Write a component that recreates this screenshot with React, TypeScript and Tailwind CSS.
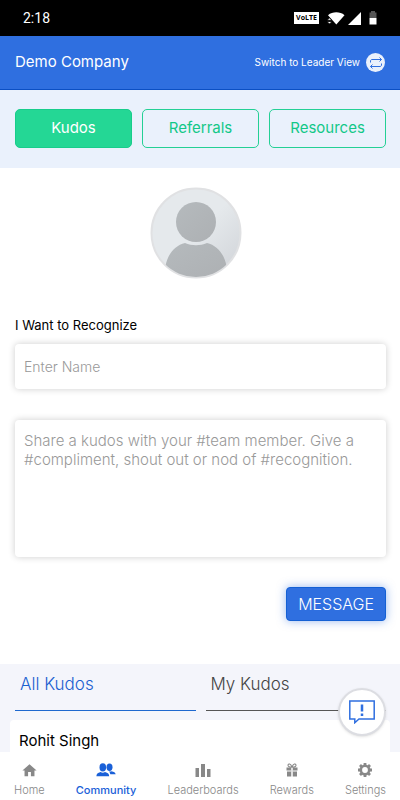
import type { ReactNode } from "react";
import { MdHome } from "react-icons/md";

const topTabs = ["Kudos", "Referrals", "Resources"];

const navItems: { label: string; icon: ReactNode }[] = [
  { label: "Home", icon: <MdHome className="size-[17px]" /> },
  { label: "Community", icon: <PeopleIcon /> },
  { label: "Leaderboards", icon: <BarsIcon /> },
  { label: "Rewards", icon: <GiftIcon /> },
  { label: "Settings", icon: <GearIcon /> },
];

function PeopleIcon() {
  return (
    <svg viewBox="0 0 20 14" className="h-[14px] w-5" fill="currentColor" aria-hidden="true">
      <ellipse cx="13.5" cy="4.2" rx="3" ry="3.7" />
      <path d="M13 8.300c1 .3 1.800.2 2.500 0 2.500.5 3.900 1.300 4.200 3h-5.400c-.2-1.200-.6-2-1.300-3Z" />
      <ellipse cx="6.800" cy="4.400" rx="3.300" ry="4.100" />
      <path d="M.4 13.300c0-2.400 1.200-3.300 4.200-4.200 1.400.7 3 .7 4.400 0 3 .9 4.200 1.800 4.200 4.200Z" />
    </svg>
  );
}

function BarsIcon() {
  return (
    <svg viewBox="0 0 16 14" className="h-[14px] w-4" fill="currentColor" aria-hidden="true">
      <path d="M.5 5h3.500v9H.5zM6 1h4v13H6zM12 6h3.500v8H12z" />
    </svg>
  );
}

function GiftIcon() {
  return (
    <svg viewBox="0 0 12 14" className="h-[14px] w-3" fill="currentColor" aria-hidden="true">
      <path d="M.5 4.500H5v3H.5zM7 4.500h4.500v3H7zM1 8.500h4v5H1zM7 8.500h4v5H7z" />
      <path d="M5.500 5h1v8.500h-1z" opacity=".5" />
      <path
        d="M6 4.300C4.500 4.300 2 3.900 2 2.300 2 .3 5 .4 6 4.300ZM6 4.300c1.500 0 4-.4 4-2C10 .3 7 .4 6 4.300Z"
        fill="none"
        stroke="currentColor"
        strokeWidth="1.100"
      />
    </svg>
  );
}

function GearIcon() {
  return (
    <svg viewBox="0 0 14 14" className="size-[14px]" fill="none" stroke="currentColor" aria-hidden="true">
      <circle cx="7" cy="7" r="4.200" strokeWidth="2.600" />
      <path
        d="M7 0v2M7 12v2M0 7h2M12 7h2M2 2l1.500 1.500M10.500 10.500 12 12M12 2l-1.500 1.500M3.500 10.500 2 12"
        strokeWidth="2.800"
      />
    </svg>
  );
}

function SwapIcon() {
  return (
    <svg
      viewBox="0 0 14 14"
      className="size-[14px]"
      fill="none"
      stroke="currentColor"
      strokeWidth="1"
      aria-hidden="true"
    >
      <path d="M1.500 6.500V5c0-.8.600-1.500 1.500-1.500h9.500M10.500 1.500l2 2-2 2M12.500 7.500V9c0 .8-.6 1.500-1.500 1.500H1.500M3.500 8.500l-2 2 2 2" />
    </svg>
  );
}

function StatusIcons() {
  return (
    <div className="flex items-center">
      <span className="flex h-3 w-[25px] items-center justify-center bg-white font-['Open_Sans',sans-serif] text-[7px] leading-3 font-bold text-black">
        VoLTE
      </span>
      <svg viewBox="0 0 18 14" className="ml-2 h-[14px] w-[18px]" fill="white" aria-hidden="true">
        <path d="M1 4.200C5.500.4 13 .4 17.500 4.200L9.300 13.500Z" />
        <path d="M2.500 7 5 9.300H0zM0 10.500h5L2.500 13z" stroke="black" strokeWidth=".8" />
      </svg>
      <svg viewBox="0 0 13 13" className="ml-[3px] size-[13px]" fill="white" aria-hidden="true">
        <path d="M13 0v13H0z" />
      </svg>
      <svg viewBox="0 0 8 14" className="ml-2 h-[14px] w-2" aria-hidden="true">
        <path d="M2 0h4v1.500h1.500V7H.5V1.500H2z" fill="#555" />
        <path d="M.5 7h7v6.500h-7z" fill="white" />
      </svg>
    </div>
  );
}

function Avatar() {
  return (
    <svg viewBox="0 0 92 92" className="size-[92px]" role="img" aria-label="Profile photo">
      <defs>
        <linearGradient id="avatar-back" x1="0" y1="0" x2="1" y2="1">
          <stop offset="0.5" stopColor="#e5e9ec" />
          <stop offset="1" stopColor="#cfd2d7" />
        </linearGradient>
        <linearGradient id="avatar-person" x1="0" y1="0" x2="1" y2="1">
          <stop offset="0" stopColor="#b5babd" />
          <stop offset="1" stopColor="#adb0b3" />
        </linearGradient>
        <clipPath id="avatar-clip">
          <circle cx="46" cy="46" r="44" />
        </clipPath>
      </defs>
      <circle cx="46" cy="46" r="44.500" fill="url(#avatar-back)" stroke="#e0e1e3" strokeWidth="2" />
      <g clipPath="url(#avatar-clip)" fill="url(#avatar-person)">
        <circle cx="46" cy="35" r="20" />
        <path d="M15.500 79c2-11.500 9-20.500 19.500-23 7 3 15 3 22 0 10.500 2.500 17.500 11.500 19.500 23v13h-61z" />
      </g>
    </svg>
  );
}

export default function App() {
  return (
    <div className="flex min-h-screen flex-col bg-white font-['Inter',sans-serif] font-light text-black">
      <div className="flex h-9 items-center justify-between bg-black pr-[23px] pl-[23px]">
        <span className="font-['Roboto',sans-serif] text-sm font-normal text-white">2:18</span>
        <StatusIcons />
      </div>

      <header className="flex h-[54px] items-center justify-between border-b border-[#0b4fc4] bg-[#2f6fe0] pr-[15px] pl-[15px] text-white">
        <h1 className="text-[15px] font-normal">Demo Company</h1>
        <button type="button" className="flex items-center gap-[6px] text-[10px] font-normal">
          Switch to Leader View
          <span className="flex size-[19px] items-center justify-center rounded-full bg-[#eaf1fc] text-[#2f6fe0]">
            <SwapIcon />
          </span>
        </button>
      </header>

      <div className="grid grid-cols-3 gap-[10px] bg-[#eaf1fc] pt-[19px] pr-[14px] pb-5 pl-[15px]">
        {topTabs.map((tab, i) => (
          <button
            key={tab}
            type="button"
            className={
              i === 0
                ? "h-[39px] rounded-[5px] border border-[#18cd8b] bg-[#24d795] text-[15px] font-normal text-white"
                : "h-[39px] rounded-[5px] border border-[#24d095] text-[15px] font-normal text-[#12c888]"
            }
          >
            {tab}
          </button>
        ))}
      </div>

      <form className="flex flex-col pt-[19px] pr-[14px] pb-[43px] pl-[15px]">
        <div className="flex justify-center pr-[10px]">
          <Avatar />
        </div>
        <label htmlFor="name" className="mt-9 text-[13px] leading-5 font-normal">
          I Want to Recognize
        </label>
        <input
          id="name"
          type="text"
          placeholder="Enter Name"
          className="mt-[9px] h-[45px] rounded-[4px] bg-white px-[9px] text-sm shadow-[0_0_7px_rgba(0,0,0,0.2)] outline-none placeholder:text-[#999]"
        />
        <textarea
          aria-label="Kudos message"
          placeholder="Share a kudos with your #team member. Give a #compliment, shout out or nod of #recognition."
          className="mt-[31px] h-[137px] resize-none rounded-[4px] bg-white px-[9px] py-[11px] text-[15px] leading-[19px] shadow-[0_0_7px_rgba(0,0,0,0.2)] outline-none placeholder:text-[#999]"
        />
        <button
          type="button"
          className="mt-[30px] h-[34px] self-end rounded-[4px] border border-[#1460d4] bg-[#2f6fe0] px-[11px] text-base text-white shadow-[0_0_10px_rgba(47,111,224,0.5)]"
        >
          MESSAGE
        </button>
      </form>

      <section className="flex flex-1 flex-col bg-[#f4f5fb]">
        <div className="grid grid-cols-2 gap-[10px] pr-[14px] pl-[15px]">
          <button
            type="button"
            className="h-[47px] border-b border-[#1d68cf] pb-1 pl-[5px] text-left text-[17px] text-[#1a60d0]"
          >
            All Kudos
          </button>
          <button
            type="button"
            className="h-[47px] border-b border-[#555] pb-1 pl-[5px] text-left text-[17px] text-[#444]"
          >
            My Kudos
          </button>
        </div>
        <article className="mx-[10px] mt-[9px] flex-1 rounded-t-[4px] bg-white px-[9px] pt-[10px]">
          <h2 className="text-[15px] leading-[22px] font-normal">Rohit Singh</h2>
        </article>
      </section>

      <nav className="sticky bottom-0 flex h-12 justify-between bg-white px-[14px]">
        {navItems.map(({ label, icon }) => (
          <a
            key={label}
            href="#"
            className={
              label === "Community"
                ? "flex flex-col items-center pt-[9px] text-[11px] leading-4 font-medium text-[#1a60d8]"
                : "flex flex-col items-center pt-[9px] text-[11px] leading-4 text-[#888]"
            }
          >
            <span className="flex h-[18px] items-center">{icon}</span>
            <span className="mt-[3px]">{label}</span>
          </a>
        ))}
      </nav>

      <button
        type="button"
        aria-label="Send feedback"
        className="fixed right-[14px] bottom-16 flex size-12 items-center justify-center rounded-full border-2 border-[#dcdde2] bg-white text-[#2f6fe0] shadow-sm"
      >
        <svg viewBox="0 0 26 24" className="h-6 w-[26px]" fill="none" stroke="currentColor" aria-hidden="true">
          <path d="M.8 1h24.400v18H10l-4.200 3.700V19h-5z" strokeWidth="1.500" />
          <path d="M13 4.500v7M13 13.500v2.500" strokeWidth="2.500" />
        </svg>
      </button>
    </div>
  );
}
